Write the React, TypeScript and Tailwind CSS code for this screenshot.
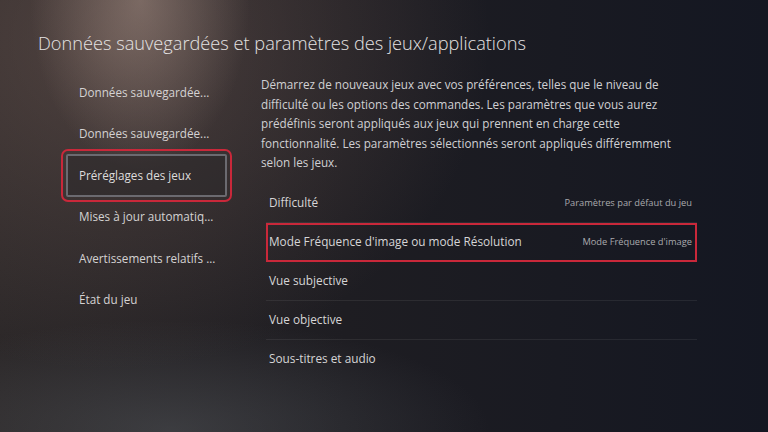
import React from 'react'

const MENU = [
  'Données sauvegardée...',
  'Données sauvegardée...',
  'Préréglages des jeux',
  'Mises à jour automatiq...',
  'Avertissements relatifs ...',
  'État du jeu',
]

const ROWS: { label: string; value?: string }[] = [
  { label: 'Difficulté', value: 'Paramètres par défaut du jeu' },
  { label: "Mode Fréquence d'image ou mode Résolution", value: "Mode Fréquence d'image" },
  { label: 'Vue subjective' },
  { label: 'Vue objective' },
  { label: 'Sous-titres et audio' },
]

export default function App() {
  return (
    <div
      className="relative w-[768px] h-[432px] overflow-hidden bg-[#161923] bg-[radial-gradient(ellipse_110px_170px_at_140px_0px,rgba(185,160,148,0.45),transparent),radial-gradient(ellipse_380px_330px_at_110px_40px,rgba(125,100,92,0.45),transparent),radial-gradient(ellipse_320px_110px_at_170px_430px,rgba(95,100,105,0.4),transparent),linear-gradient(90deg,#2b2728_0%,#1e1d22_45%,#141722_100%)] font-['Open_Sans','Noto_Sans',sans-serif] text-[#dcdcdc]"
    >
      {/* Title */}
      <h1 className="pl-[38px] pt-[30px] text-[18.2px] leading-[26px] font-light text-[#e4e2e2]">
        Données sauvegardées et paramètres des jeux/applications
      </h1>

      <div className="flex pt-[16px]">
        {/* Left menu */}
        <div className="ml-[66px] w-[161px] flex flex-col">
          {MENU.map((item, i) => {
            const selected = i === 2
            return (
              <div
                key={i}
                className={
                  selected
                    ? 'h-[43px] -my-[0.75px] flex items-center pl-[11px] whitespace-nowrap border-2 border-[#6b6a70] rounded-[2px] bg-[#2a2729]/50 outline-2 outline-[#c9283a] outline-offset-[3px] text-[11.7px] text-[#dedcdc]'
                    : 'h-[41.5px] flex items-center pl-[13px] whitespace-nowrap text-[11.7px] text-[#d4d2d2]'
                }
              >
                {item}
              </div>
            )
          })}
        </div>

        {/* Right panel */}
        <div className="ml-[34px] w-[432px] flex flex-col pt-[5px]">
          <p className="-mt-[2px] w-[414px] text-[11.7px] leading-[19.5px] text-[#d0d0d3]">
            Démarrez de nouveaux jeux avec vos préférences, telles que le niveau de difficulté ou les options des commandes. Les paramètres que vous aurez prédéfinis seront appliqués aux jeux qui prennent en charge cette fonctionnalité. Les paramètres sélectionnés seront appliqués différemment selon les jeux.
          </p>

          <div className="mt-[11px] ml-[5px] w-[431px] flex flex-col">
            {ROWS.map((row, i) => {
              const boxed = i === 1
              const last = i === ROWS.length - 1
              return (
                <div
                  key={i}
                  className={
                    boxed
                      ? 'h-[39px] flex items-center justify-between pl-[1px] pr-[3px] border-2 border-[#c9283a]'
                      : last
                        ? 'h-[39px] flex items-center justify-between pl-[3px] pr-[5px]'
                        : 'h-[39px] flex items-center justify-between pl-[3px] pr-[5px] border-b border-white/[0.07]'
                  }
                >
                  <span className="text-[11.8px] text-[#d6d5d6]">{row.label}</span>
                  {row.value && <span className="text-[9.3px] text-[#a9a9ad]">{row.value}</span>}
                </div>
              )
            })}
          </div>
        </div>
      </div>
    </div>
  )
}
